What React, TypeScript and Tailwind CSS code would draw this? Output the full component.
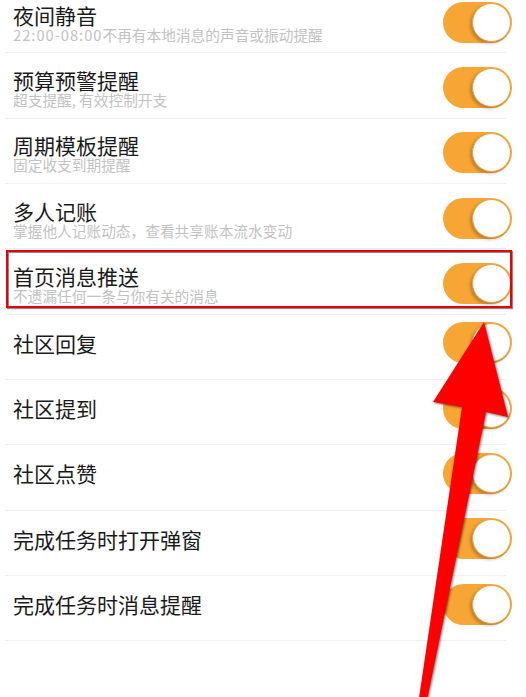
import React from "react";

type Item = { title: string; sub?: React.ReactNode };

const items: Item[] = [
  {
    title: "夜间静音",
    sub: (
      <>
        <span className="tracking-[1px]">22:00-08:00</span>不再有本地消息的声音或振动提醒
      </>
    ),
  },
  { title: "预算预警提醒", sub: "超支提醒, 有效控制开支" },
  { title: "周期模板提醒", sub: "固定收支到期提醒" },
  { title: "多人记账", sub: "掌握他人记账动态，查看共享账本流水变动" },
  { title: "首页消息推送", sub: "不遗漏任何一条与你有关的消息" },
  { title: "社区回复" },
  { title: "社区提到" },
  { title: "社区点赞" },
  { title: "完成任务时打开弹窗" },
  { title: "完成任务时消息提醒" },
];

function Toggle() {
  return (
    <div className="flex h-[41px] w-[69px] shrink-0 items-center justify-end rounded-full bg-[#f7a534] pr-[1px]">
      <div className="h-[39px] w-[39px] rounded-full border border-[#e9a048] bg-white shadow-[-2px_2px_3px_rgba(0,0,0,0.22)]" />
    </div>
  );
}

function Row({ item }: { item: Item }) {
  return (
    <div className="flex h-[65.33px] flex-col">
      <div
        className={
          item.sub
            ? "flex flex-1 items-center justify-between pl-[13px] pr-[14px] pt-[4px]"
            : "flex flex-1 items-center justify-between pl-[13px] pr-[14px] pb-[8px]"
        }
      >
        <div className="flex flex-col">
          <div className="text-[21px] leading-[24px] text-[#1a1a1a]">{item.title}</div>
          {item.sub && (
            <div className="text-[14.7px] leading-[15px] text-[#c2c2c2]">{item.sub}</div>
          )}
        </div>
        <Toggle />
      </div>
      <div className="ml-[5px] mr-[20px] h-px bg-[#efefef]" />
    </div>
  );
}

export default function App() {
  return (
    <div
      className="relative h-[697px] w-[526px] overflow-hidden bg-white"
      style={{ fontFamily: '"Noto Sans CJK SC", "Noto Sans", sans-serif' }}
    >
      <div className="mt-[-12px]">
        {items.map((it) => (
          <Row key={it.title} item={it} />
        ))}
      </div>

      {/* annotation: red highlight box */}
      <div className="absolute left-[6px] top-[250px] h-[58px] w-[506px] border-2 border-[#e8000b] shadow-[inset_1px_1px_0_#8a8a8a,1px_1px_1px_rgba(0,0,0,0.45)]" />

      {/* annotation: red arrow */}
      <svg
        className="absolute left-0 top-0"
        width="526"
        height="697"
        viewBox="0 0 526 697"
        style={{ filter: "drop-shadow(1.5px 1.5px 1px rgba(0,0,0,0.55))" }}
      >
        <polygon
          points="484,322 508,417 486,412 426,705 418,705 462,407 433,402"
          fill="#ff0000"
        />
      </svg>
    </div>
  );
}
